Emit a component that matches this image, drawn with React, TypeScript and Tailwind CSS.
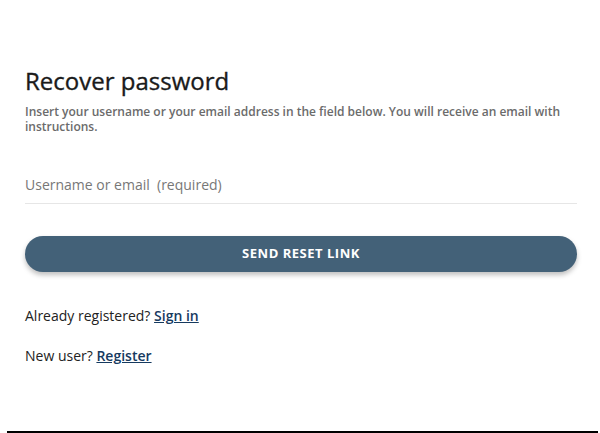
import React from "react";

const App = () => {
  return (
    <div className="relative h-[433px] w-[600px] overflow-hidden bg-white font-['Open_Sans',sans-serif] text-[#222]">
      <div className="pl-[25px] pr-[23px] pt-[64px]">
        <h1 className="text-[24px] font-medium leading-[34px] text-[#1a1a1a] [-webkit-text-stroke:0.35px_#1a1a1a]">
          Recover password
        </h1>
        <p className="mt-[6px] text-[12px] font-semibold leading-[15px] text-[#6b6b6b]">
          Insert your username or your email address in the field below. You will receive an email with instructions.
        </p>
        <div className="mt-[38px] border-b border-[#e6e6e6] pb-[7px]">
          <input
            type="text"
            placeholder="Username or email  (required)"
            className="w-full bg-transparent text-[14px] leading-[19px] text-[#222] outline-none placeholder:text-[#777]"
          />
        </div>
        <button
          type="button"
          className="mt-[32px] flex h-[36px] w-full items-center justify-center rounded-full bg-[#436178] text-[13px] font-bold tracking-[0.04em] text-white shadow-[0_3px_5px_rgba(0,0,0,0.25)]"
        >
          SEND RESET LINK
        </button>
        <p className="mt-[34px] text-[14px] leading-[19px]">
          Already registered?{" "}
          <a href="#" className="font-semibold text-[#163a5f] underline">
            Sign in
          </a>
        </p>
        <p className="mt-[21px] text-[14px] leading-[19px]">
          New user?{" "}
          <a href="#" className="font-semibold text-[#163a5f] underline">
            Register
          </a>
        </p>
      </div>
      <div className="absolute bottom-0 left-[7px] right-[2px] h-[2px] bg-black" />
    </div>
  );
};

export default App;
